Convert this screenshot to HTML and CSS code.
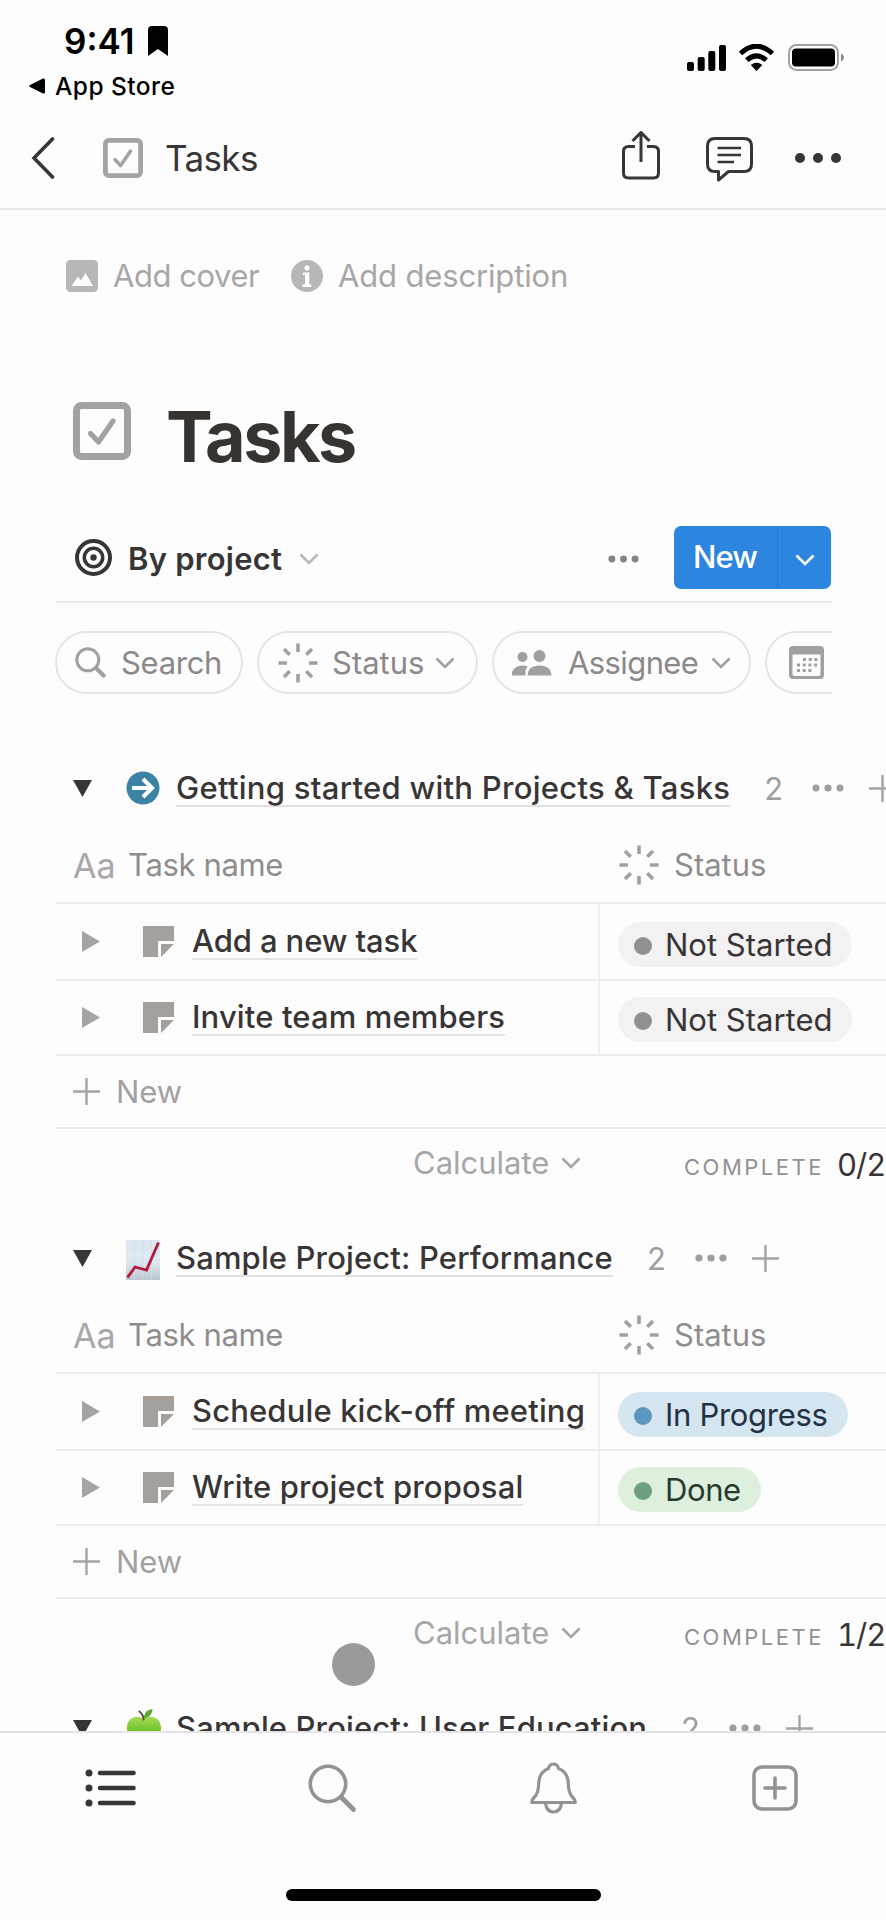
FILE: index.html
```html
<!DOCTYPE html>
<html lang="en">
<head>
<meta charset="utf-8">
<title>Tasks</title>
<link rel="stylesheet" href="styles.css">
</head>
<body>
<svg class="defs" width="0" height="0">
  <symbol id="checkbox" viewBox="0 0 58 58"><rect x="3.5" y="3.5" width="51" height="51" rx="5" fill="none" stroke="currentColor" stroke-width="7"/><path d="M17.5 31.5 25.5 40 40 19" fill="none" stroke="currentColor" stroke-width="5.2" stroke-linecap="round" stroke-linejoin="round"/></symbol>
  <symbol id="chevron" viewBox="0 0 20 12"><path d="M1.5 1.5 10 10 18.500 1.500" fill="none" stroke="currentColor" stroke-width="2.6"/></symbol>
  <symbol id="dots" viewBox="0 0 32 8"><circle cx="4" cy="4" r="3.6"/><circle cx="16" cy="4" r="3.6"/><circle cx="28" cy="4" r="3.600"/></symbol>
  <symbol id="plus" viewBox="0 0 27 27"><path d="M13.500 0V27M0 13.500H27" fill="none" stroke="currentColor" stroke-width="2.400"/></symbol>
  <symbol id="burst" viewBox="-20 -20 40 40"><g stroke="currentColor" stroke-width="3.600"><path id="ray" d="M0-19.500V-11M0 11V19.500M-19.500 0H-11M11 0H19.500M-14-14-8.300-8.300M14-14 8.300-8.300M-14 14-8.300 8.300M14 14 8.300 8.300"/></g></symbol>
  <symbol id="lens" viewBox="0 0 31 31"><circle cx="12.800" cy="12.800" r="11" fill="none" stroke="currentColor" stroke-width="3"/><path d="M21 21 28.500 28.500" stroke="currentColor" stroke-width="4.200" stroke-linecap="round"/></symbol>
  <symbol id="note" viewBox="0 0 31 31"><path d="M0 0H31V15H15V31H0Z"/><path d="M18 18H31L18 31Z"/></symbol>
  <symbol id="down" viewBox="0 0 19 17"><path d="M0 0H19L9.500 17Z"/></symbol>
  <symbol id="right" viewBox="0 0 18 21"><path d="M0 0 18 10.500 0 21Z"/></symbol>
</svg>
<div class="screen">
  <header class="status">
    <div class="clock"><span class="time">9:41</span><svg class="bookmark" viewBox="0 0 20 30"><path d="M0 4Q0 0 4 0H16Q20 0 20 4V30L10 23 0 30Z"/></svg></div>
    <div class="signals">
      <svg width="39" height="26" viewBox="0 0 39 26"><rect x="0" y="17" width="7" height="9" rx="2"/><rect x="10.700" y="12" width="7" height="14" rx="2"/><rect x="21.300" y="6" width="7" height="20" rx="2"/><rect x="32" width="7" height="26" rx="2"/></svg>
      <svg class="wifi" width="37" height="27" viewBox="0 0 37 27"><path d="M2.500 9.500Q18.500-5 34.500 9.500M8.800 16.200Q18.500 7.500 28.200 16.200" fill="none" stroke="#000" stroke-width="5"/><path d="M12.700 21Q18.500 16.500 24.300 21L18.500 27Z"/></svg>
      <svg class="battery" width="56" height="27" viewBox="0 0 56 27"><rect x="1" y="1" width="49" height="25" rx="7.500" fill="none" stroke="#a2a2a2" stroke-width="2"/><rect x="4" y="4.500" width="43" height="18" rx="4"/><path d="M53 9.500Q56 11 56 13.500T53 17.500Z" fill="#888"/></svg>
    </div>
  </header>
  <div class="return"><svg width="16" height="16" viewBox="0 0 16 16"><path d="M1 7 14 .5Q16 0 16 2V14Q16 16 14 15.500L1 9Q-.5 8 1 7Z"/></svg><span>App Store</span></div>
  <nav class="nav">
    <svg class="back" viewBox="0 0 24 42"><path d="M21.500 2 3 21 21.500 40" fill="none" stroke="currentColor" stroke-width="3.600" stroke-linecap="round"/></svg>
    <svg class="nav-check"><use href="#checkbox"/></svg>
    <span class="nav-title">Tasks</span>
    <svg class="share outline" viewBox="0 0 38 49" stroke-width="3"><path d="M13 15.500H6.500Q1.500 15.500 1.500 20.500V42Q1.500 47 6.500 47H31.500Q36.500 47 36.500 42V20.500Q36.500 15.500 31.500 15.500H25M19 31V2M10.500 10 19 1.500 27.500 10"/></svg>
    <svg class="comment outline" viewBox="0 0 47 45" stroke-width="3" stroke-linejoin="round"><path d="M9 1.500H38Q45.500 1.500 45.500 9V27Q45.500 34.500 38 34.500H22.500L12.500 43V34.500H9Q1.500 34.500 1.500 27V9Q1.500 1.500 9 1.500Z"/><path d="M11.500 11H35M11.500 18H35M11.500 25H28" stroke-width="2.500"/></svg>
    <svg class="more" viewBox="0 0 46 10"><circle cx="5" cy="5" r="5"/><circle cx="23" cy="5" r="5"/><circle cx="41" cy="5" r="5"/></svg>
  </nav>
  <main class="page">
    <div class="hints">
      <svg width="32" height="32" viewBox="0 0 32 32"><rect width="32" height="32" rx="4.500"/><path d="M5.500 26 12 16.500 15 20.500 19.500 13 27 26Z" fill="#fff"/></svg><span class="hint-cover">Add cover</span>
      <svg width="32" height="32" viewBox="0 0 32 32"><circle cx="16" cy="16" r="16"/><circle cx="16" cy="7.800" r="2.600" fill="#fff"/><path d="M12 12.500H18.300V24.500H20.500V27H11.500V24.500H14V15H12Z" fill="#fff"/></svg><span class="hint-desc">Add description</span>
    </div>
    <h1 class="title"><svg><use href="#checkbox"/></svg><span>Tasks</span></h1>
    <div class="view">
      <svg class="target outline" viewBox="0 0 37 37"><circle cx="18.500" cy="18.500" r="16.500" stroke-width="4"/><circle cx="18.500" cy="18.500" r="9.200" stroke-width="3.500"/><circle cx="18.500" cy="18.500" r="3.200" fill="currentColor" stroke="none"/></svg>
      <span class="view-name">By project</span><svg class="chev faint"><use href="#chevron"/></svg>
      <svg class="view-more"><use href="#dots"/></svg>
      <div class="new"><span>New</span><div><svg class="chev"><use href="#chevron"/></svg></div></div>
    </div>
    <div class="filters">
      <div class="chip search"><svg><use href="#lens"/></svg><span>Search</span></div>
      <div class="chip state"><svg class="burst"><use href="#burst"/></svg><span>Status</span><svg class="chev"><use href="#chevron"/></svg></div>
      <div class="chip who"><svg viewBox="0 0 40 26" class="people"><circle cx="10.500" cy="7" r="5"/><path d="M0 25.500V22Q3 15.500 10 15.500 14 15.500 15.500 16.500L13.500 20V25.500Z"/><circle cx="27.500" cy="6" r="6"/><path d="M15.500 25.500Q16 15.500 27.500 15.500T39.500 25.500Z"/></svg><span>Assignee</span><svg class="chev"><use href="#chevron"/></svg></div>
      <div class="chip date"><svg width="35" height="33" viewBox="0 0 35 33"><path fill-rule="evenodd" d="M4 0H31Q35 0 35 4V29Q35 33 31 33H4Q0 33 0 29V4Q0 0 4 0ZM3.500 8.500V28Q3.500 30 5.500 30H29.500Q31.500 30 31.500 28V8.500Z"/><path d="M14 13.500H29M8 19H29M8 24.500H23" fill="none" stroke="currentColor" stroke-width="3" stroke-dasharray="3 2.700"/></svg></div>
    </div>
    <section class="group">
      <div class="group-head"><svg class="down"><use href="#down"/></svg><svg class="emblem" viewBox="0 0 34 34"><circle cx="17" cy="17" r="16.500" fill="#3b83a5"/><path d="M6 17H26M17 8 26 17 17 26" fill="none" stroke="#fff" stroke-width="4"/></svg><span class="link g1">Getting started with Projects &amp; Tasks</span><span class="count">2</span><svg class="dots"><use href="#dots"/></svg><svg class="plus"><use href="#plus"/></svg></div>
      <div class="cols"><span class="aa">Aa</span><span class="col-name">Task name</span><svg class="burst"><use href="#burst"/></svg><span class="col-status">Status</span></div>
      <div class="row first"><div class="cell"><svg class="right"><use href="#right"/></svg><svg class="note"><use href="#note"/></svg><span class="link t1">Add a new task</span></div><div class="value"><span class="tag grey"><i></i><span>Not Started</span></span></div></div>
      <div class="row"><div class="cell"><svg class="right"><use href="#right"/></svg><svg class="note"><use href="#note"/></svg><span class="link t2">Invite team members</span></div><div class="value"><span class="tag grey"><i></i><span>Not Started</span></span></div></div>
      <div class="add"><svg class="plus"><use href="#plus"/></svg><span>New</span></div>
      <div class="sum"><span class="calc">Calculate</span><svg class="chev"><use href="#chevron"/></svg><span class="label">COMPLETE</span><span class="ratio">0/2</span></div>
    </section>
    <section class="group">
      <div class="group-head"><svg class="down"><use href="#down"/></svg><svg class="emblem chart" viewBox="0 0 34 40"><defs><linearGradient id="paper" x2="0" y2="1"><stop stop-color="#dce6f0"/><stop offset=".5" stop-color="#e0ebf4"/><stop offset="1" stop-color="#bcc6d0"/></linearGradient></defs><path d="M0 0H34V40H0Z" fill="url(#paper)"/><path d="M8.500 0V40M17 0V40M25.500 0V40M0 10H34M0 20H34M0 30H34" stroke="#d2dde7" stroke-width=".6"/><path d="M1.500 37.500 9 27 20.500 30 32.500 2.500" fill="none" stroke="#b5183a" stroke-width="2.800"/></svg><span class="link g2">Sample Project: Performance</span><span class="count">2</span><svg class="dots"><use href="#dots"/></svg><svg class="plus"><use href="#plus"/></svg></div>
      <div class="cols"><span class="aa">Aa</span><span class="col-name">Task name</span><svg class="burst"><use href="#burst"/></svg><span class="col-status">Status</span></div>
      <div class="row first"><div class="cell"><svg class="right"><use href="#right"/></svg><svg class="note"><use href="#note"/></svg><span class="link t3">Schedule kick-off meeting</span></div><div class="value"><span class="tag blue"><i></i><span>In Progress</span></span></div></div>
      <div class="row"><div class="cell"><svg class="right"><use href="#right"/></svg><svg class="note"><use href="#note"/></svg><span class="link t4">Write project proposal</span></div><div class="value"><span class="tag green"><i></i><span>Done</span></span></div></div>
      <div class="add"><svg class="plus"><use href="#plus"/></svg><span>New</span></div>
      <div class="sum"><span class="calc">Calculate</span><svg class="chev"><use href="#chevron"/></svg><span class="label">COMPLETE</span><span class="ratio">1/2</span></div>
    </section>
    <section class="group">
      <div class="group-head"><svg class="down"><use href="#down"/></svg><svg class="emblem apple" viewBox="0 0 38 40"><defs><linearGradient id="skin" x2="0" y2="1"><stop stop-color="#a5dd55"/><stop offset=".6" stop-color="#60bd22"/></linearGradient></defs><path d="M18 10C10 5 1 10 1 20S9 39 14 39 18 37 19 37 21 39 25 39 37 30 37 20 28 5 18 10Z" fill="url(#skin)"/><path d="M18.500 12Q19 6 13.500 2" fill="none" stroke="#5d4a2a" stroke-width="2"/><path d="M19 10Q19 1 28 0 28 8 19 10Z" fill="#5aa832"/></svg><span class="link g3">Sample Project: User Education</span><span class="count">2</span><svg class="dots"><use href="#dots"/></svg><svg class="plus"><use href="#plus"/></svg></div>
    </section>
  </main>
  <footer class="tabs">
    <div class="tab active"><svg width="52" height="38" viewBox="0 0 52 38"><path d="M15 4H48.500M15 19H48.500M15 34H48.500" stroke="currentColor" stroke-width="4.600" stroke-linecap="round"/><circle cx="4" cy="4" r="3.500"/><circle cx="4" cy="19" r="3.500"/><circle cx="4" cy="34" r="3.500"/></svg></div>
    <div class="tab"><svg class="outline" width="49" height="49" viewBox="0 0 49 49"><circle cx="20" cy="20" r="17.700" stroke-width="3.600"/><path d="M33 33 45.500 45.500" stroke-width="4.800" stroke-linecap="round"/></svg></div>
    <div class="tab"><svg class="outline" width="47" height="52" viewBox="0 0 47 52" stroke-width="3.200" stroke-linejoin="round"><path d="M23.500 2Q19.500 2 18.500 6.500 9 10 8.700 22 8.500 31 4.500 35 1.500 38 1.800 40.500H45.200Q45.500 38 42.500 35 38.500 31 38.300 22 38 10 28.500 6.500 27.500 2 23.500 2Z"/><path d="M15.500 41Q16.500 50 23.500 50T31.500 41"/></svg></div>
    <div class="tab"><svg class="outline" width="46" height="46" viewBox="0 0 46 46" stroke-width="3.600"><rect x="2" y="2" width="42" height="42" rx="8"/><path d="M23 13V33M13 23H33" stroke-linecap="round"/></svg></div>
    <div class="home"></div>
  </footer>
  <div class="touch"></div>
</div>
</body>
</html>
```
FILE: styles.css
```css
* { box-sizing: border-box; }
body { margin: 0; background: #fefdfe; font-family: Inter, "Liberation Sans", sans-serif; font-size: 31px; line-height: 40px; color: #373536; }
svg { display: block; flex: none; fill: currentColor; }
.outline { fill: none; stroke: currentColor; }
.defs { position: absolute; }
span { white-space: nowrap; flex: none; }
.screen { position: relative; width: 886px; height: 1920px; overflow: hidden; display: flex; flex-direction: column; }

.status { height: 72px; display: flex; justify-content: space-between; color: #000; padding: 21px 42px 0 64px; }
.clock { display: flex; height: 40px; align-items: center; }
.time { font-size: 35px; font-weight: 600; width: 84px; letter-spacing: 0; }
.bookmark { width: 20px; height: 30px; }
.signals { display: flex; align-items: center; height: 27px; margin-top: 23px; }
.wifi { margin-left: 12px; }
.battery { margin-left: 13px; }
.return { height: 28px; display: flex; align-items: center; padding-left: 29px; color: #000; font-size: 24.5px; font-weight: 500; gap: 10px; letter-spacing: .45px; }

.nav { height: 110px; border-bottom: 2px solid #e9e8e9; display: flex; align-items: center; padding: 7px 0 0 31px; }
.back { width: 24px; height: 42px; }
.nav-check { width: 40px; height: 40px; margin-left: 48px; color: #a5a3a3; }
.nav-title { font-size: 35px; letter-spacing: -.6px; margin-left: 22px; width: 457px; }
.share { width: 38px; height: 49px; margin-top: -4px; }
.comment { width: 47px; height: 45px; margin: 3px 0 0 46px; }
.more { width: 46px; height: 10px; margin-left: 42px; }

.page { flex: 1; min-height: 0; overflow: hidden; }
.hints { height: 132px; display: flex; align-items: center; padding-left: 66px; color: #b9b6b7; }
.hints span { color: #a8a6a7; }
.hint-cover { margin-left: 15px; width: 178px; letter-spacing: -.45px; }
.hint-desc { margin-left: 15px; letter-spacing: -.15px; }
.title { margin: 0; height: 170px; display: flex; align-items: center; padding: 20px 0 0 73px; font-size: 70px; font-weight: 700; line-height: 80px; color: #373330; }
.title svg { width: 58px; height: 58px; color: #a3a1a1; margin-top: -8px; margin-bottom: 4px; }
.title span { margin-left: 35px; letter-spacing: -2.5px; }

.view { height: 89px; margin: 2px 54px 0 56px; padding-bottom: 1px; border-bottom: 2px solid #e9e8e9; display: flex; align-items: center; }
.target { width: 37px; height: 37px; margin-left: 19px; }
.view-name { font-weight: 600; margin: 3px 0 0 16px; width: 171px; letter-spacing: .25px; }
.chev { width: 20px; height: 12px; color: #a5a3a4; }
.chev.faint { color: #b9b7b8; margin-top: 4px; }
.view-more { width: 31px; height: 8px; color: #858384; margin: 3px 0 0 289px; }
.new { margin-left: 35px; width: 157px; height: 63px; border-radius: 7px; background: #2c85de; color: #fff; display: flex; font-weight: 500; line-height: 62px; letter-spacing: -.9px; }
.new span { width: 104px; padding-left: 19px; border-right: 1px solid #2777c8; }
.new div { flex: 1; display: flex; align-items: center; padding: 5px 0 0 17px; }
.new .chev { color: #fff; }

.filters { display: flex; gap: 14px; margin: 28px 54px 0 55px; height: 63px; overflow: hidden; color: #8b898a; }
.chip { flex: none; height: 63px; border: 2px solid #e6e4e6; border-radius: 32px; display: flex; align-items: center; }
.chip svg { color: #a19fa0; }
.search { width: 188px; padding-left: 18px; }
.search svg { width: 31px; height: 31px; }
.search span { margin-left: 15px; letter-spacing: -.3px; }
.state { width: 221px; padding-left: 19px; }
.burst { width: 40px; height: 40px; color: #a19fa0; }
.state span { margin-left: 14px; width: 103px; }
.who { width: 259px; padding-left: 18px; }
.people { width: 40px; height: 26px; }
.who span { margin-left: 16px; width: 143px; letter-spacing: -.6px; }
.date { width: 240px; padding-left: 22px; }

.group { height: 470px; }
.filters + .group { margin-top: 51px; }
.group-head { height: 86px; display: flex; align-items: center; padding-left: 73px; }
.down { width: 19px; height: 17px; }
.emblem { width: 34px; height: 34px; margin-left: 34px; }
.chart { height: 40px; margin-top: 4px; }
.apple { width: 36px; height: 40px; margin: 0 -2px 0 34px; }
.link { font-weight: 500; margin: 1px 0 0 16px; line-height: 34px; border-bottom: 2px solid #e2e0e1; }
.g1 { letter-spacing: .28px; }
.g2, .g3 { letter-spacing: .14px; }
.count { color: #a09ea0; margin: 1px 0 0 34px; width: 18px; }
.dots { width: 32px; height: 8px; color: #9f9d9e; margin-left: 30px; }
.group-head .plus { margin-left: 25px; }
.plus { width: 27px; height: 27px; color: #a5a3a4; }
.cols { height: 73px; margin-left: 56px; border-bottom: 2px solid #ececed; display: flex; align-items: center; padding: 0 0 4px 17px; color: #8f8d8e; }
.aa { font-size: 34px; color: #a9a7a8; width: 55px; padding-top: 3px; }
.col-name { width: 491px; letter-spacing: -.35px; }
.col-status { margin-left: 15px; }
.row { height: 75px; margin-left: 56px; border-bottom: 2px solid #ececed; display: flex; }
.first { height: 77px; }
.cell { width: 544px; border-right: 2px solid #f1f0f1; display: flex; align-items: center; padding-left: 26px; }
.right { width: 18px; height: 21px; color: #a5a3a4; }
.note { width: 31px; height: 31px; margin-left: 43px; color: #a5a09b; }
.row .link { margin: -1px 0 0 18px; border-color: #e6e3e5; line-height: 35px; }
.t1 { letter-spacing: -.1px; }
.t2, .t3, .t4 { letter-spacing: .14px; }
.value { padding: 18px 0 0 18px; }
.row:not(.first) .value { padding-top: 16px; }
.tag { display: inline-flex; align-items: center; height: 45px; border-radius: 23px; padding: 0 20px 0 16px; }
.tag i { width: 18px; height: 18px; border-radius: 50%; margin: 3px 13px 0 0; }
.grey { background: #f3f1f2; }
.grey i { background: #929091; }
.blue { background: #d5e6f1; color: #223246; letter-spacing: -.3px; }
.blue i { background: #5c97bf; }
.green { background: #deefde; color: #263b2e; letter-spacing: -.4px; }
.green i { background: #6e9f80; }
.add { height: 73px; margin-left: 56px; border-bottom: 2px solid #ececed; display: flex; align-items: center; padding-left: 17px; color: #a2a0a1; }
.add span { margin-left: 16px; }
.sum { height: 86px; display: flex; align-items: center; padding: 0 0 19px 413px; color: #a8a6a7; }
.calc { width: 148px; }
.sum .label { font-size: 22px; letter-spacing: 2.5px; margin: 9px 0 0 103px; width: 153px; color: #929091; }
.ratio { color: #373536; padding-top: 4px; letter-spacing: -1px; font-variant-numeric: tabular-nums; }

.tabs { height: 189px; border-top: 2px solid #e4e2e5; background: #fdfcfe; display: grid; grid-template-columns: repeat(4, 221.5px); grid-template-rows: 156px 12px; color: #949293; }
.tab { display: flex; justify-content: center; height: 110px; align-items: center; }
.active { color: #373536; }
.home { grid-column: 1 / -1; width: 315px; height: 12px; border-radius: 6px; background: #000; margin-left: 286px; }
.touch { position: absolute; left: 332px; top: 1643px; width: 43px; height: 43px; border-radius: 50%; background: #9c999c; }
```
